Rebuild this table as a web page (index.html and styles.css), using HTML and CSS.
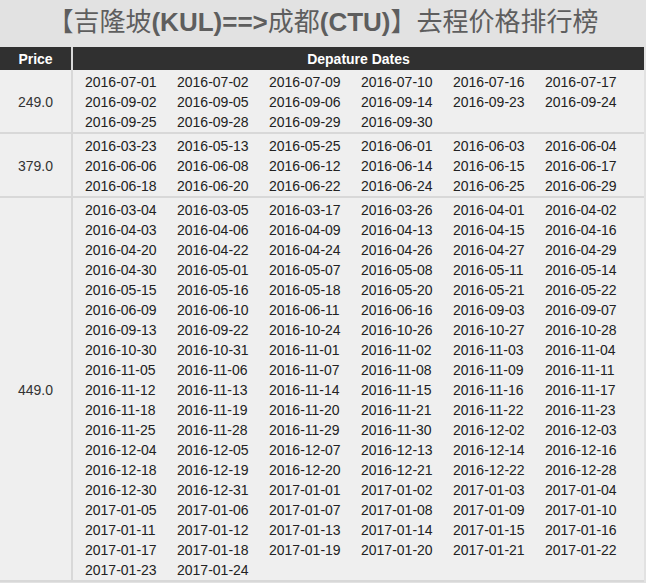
FILE: index.html
```html
<!DOCTYPE html>
<html lang="zh-CN">
<head>
<meta charset="utf-8">
<title>去程价格排行榜</title>
<link rel="stylesheet" href="styles.css">
</head>
<body>
<h1 class="title">【吉隆坡<b>(KUL)==&gt;</b>成都<b>(CTU)</b>】去程价格排行榜</h1>
<table class="fares">
<thead>
<tr><th class="col-price">Price</th><th class="col-dates">Depature Dates</th></tr>
</thead>
<tbody>
<tr>
<td class="price">249.0</td>
<td class="dates"><div class="grid">
<span>2016-07-01</span><span>2016-07-02</span><span>2016-07-09</span><span>2016-07-10</span><span>2016-07-16</span><span>2016-07-17</span>
<span>2016-09-02</span><span>2016-09-05</span><span>2016-09-06</span><span>2016-09-14</span><span>2016-09-23</span><span>2016-09-24</span>
<span>2016-09-25</span><span>2016-09-28</span><span>2016-09-29</span><span>2016-09-30</span>
</div></td>
</tr>
<tr>
<td class="price">379.0</td>
<td class="dates"><div class="grid">
<span>2016-03-23</span><span>2016-05-13</span><span>2016-05-25</span><span>2016-06-01</span><span>2016-06-03</span><span>2016-06-04</span>
<span>2016-06-06</span><span>2016-06-08</span><span>2016-06-12</span><span>2016-06-14</span><span>2016-06-15</span><span>2016-06-17</span>
<span>2016-06-18</span><span>2016-06-20</span><span>2016-06-22</span><span>2016-06-24</span><span>2016-06-25</span><span>2016-06-29</span>
</div></td>
</tr>
<tr>
<td class="price">449.0</td>
<td class="dates"><div class="grid">
<span>2016-03-04</span><span>2016-03-05</span><span>2016-03-17</span><span>2016-03-26</span><span>2016-04-01</span><span>2016-04-02</span>
<span>2016-04-03</span><span>2016-04-06</span><span>2016-04-09</span><span>2016-04-13</span><span>2016-04-15</span><span>2016-04-16</span>
<span>2016-04-20</span><span>2016-04-22</span><span>2016-04-24</span><span>2016-04-26</span><span>2016-04-27</span><span>2016-04-29</span>
<span>2016-04-30</span><span>2016-05-01</span><span>2016-05-07</span><span>2016-05-08</span><span>2016-05-11</span><span>2016-05-14</span>
<span>2016-05-15</span><span>2016-05-16</span><span>2016-05-18</span><span>2016-05-20</span><span>2016-05-21</span><span>2016-05-22</span>
<span>2016-06-09</span><span>2016-06-10</span><span>2016-06-11</span><span>2016-06-16</span><span>2016-09-03</span><span>2016-09-07</span>
<span>2016-09-13</span><span>2016-09-22</span><span>2016-10-24</span><span>2016-10-26</span><span>2016-10-27</span><span>2016-10-28</span>
<span>2016-10-30</span><span>2016-10-31</span><span>2016-11-01</span><span>2016-11-02</span><span>2016-11-03</span><span>2016-11-04</span>
<span>2016-11-05</span><span>2016-11-06</span><span>2016-11-07</span><span>2016-11-08</span><span>2016-11-09</span><span>2016-11-11</span>
<span>2016-11-12</span><span>2016-11-13</span><span>2016-11-14</span><span>2016-11-15</span><span>2016-11-16</span><span>2016-11-17</span>
<span>2016-11-18</span><span>2016-11-19</span><span>2016-11-20</span><span>2016-11-21</span><span>2016-11-22</span><span>2016-11-23</span>
<span>2016-11-25</span><span>2016-11-28</span><span>2016-11-29</span><span>2016-11-30</span><span>2016-12-02</span><span>2016-12-03</span>
<span>2016-12-04</span><span>2016-12-05</span><span>2016-12-07</span><span>2016-12-13</span><span>2016-12-14</span><span>2016-12-16</span>
<span>2016-12-18</span><span>2016-12-19</span><span>2016-12-20</span><span>2016-12-21</span><span>2016-12-22</span><span>2016-12-28</span>
<span>2016-12-30</span><span>2016-12-31</span><span>2017-01-01</span><span>2017-01-02</span><span>2017-01-03</span><span>2017-01-04</span>
<span>2017-01-05</span><span>2017-01-06</span><span>2017-01-07</span><span>2017-01-08</span><span>2017-01-09</span><span>2017-01-10</span>
<span>2017-01-11</span><span>2017-01-12</span><span>2017-01-13</span><span>2017-01-14</span><span>2017-01-15</span><span>2017-01-16</span>
<span>2017-01-17</span><span>2017-01-18</span><span>2017-01-19</span><span>2017-01-20</span><span>2017-01-21</span><span>2017-01-22</span>
<span>2017-01-23</span><span>2017-01-24</span>
</div></td>
</tr>
</tbody>
</table>
</body>
</html>
```
FILE: styles.css
```css
html, body {
  margin: 0;
  padding: 0;
  background: #e2e2e2;
}
body {
  font-family: "Liberation Sans", Arial, "Noto Sans CJK SC", sans-serif;
  color: #222;
}
.title {
  margin: 0;
  height: 47px;
  line-height: 44px;
  font-size: 26px;
  font-weight: normal;
  color: #5e5e5e;
  text-align: center;
  font-family: "Liberation Sans", "Noto Sans CJK SC", sans-serif;
}
.title b {
  font-weight: bold;
}
.fares {
  width: 644px;
  border-collapse: collapse;
  border-spacing: 0;
  font-size: 14px;
}
.fares th {
  background: #303030;
  color: #fff;
  font-weight: bold;
  height: 23px;
  padding: 0;
  line-height: 20px;
  text-align: center;
}
.col-price {
  width: 71px;
  border-right: 2px solid #d8d8d8;
}
.fares td {
  background: #efefef;
  border-bottom: 2px solid #d8d8d8;
  padding: 2px 0 0;
  vertical-align: middle;
}
.price {
  width: 71px;
  text-align: center;
  border-right: 2px solid #d8d8d8;
  color: #333;
}
.dates {
  padding-left: 12px;
}
.grid {
  display: grid;
  grid-template-columns: repeat(6, 92px);
  padding-left: 12px;
  line-height: 20px;
  color: #222;
}
```
